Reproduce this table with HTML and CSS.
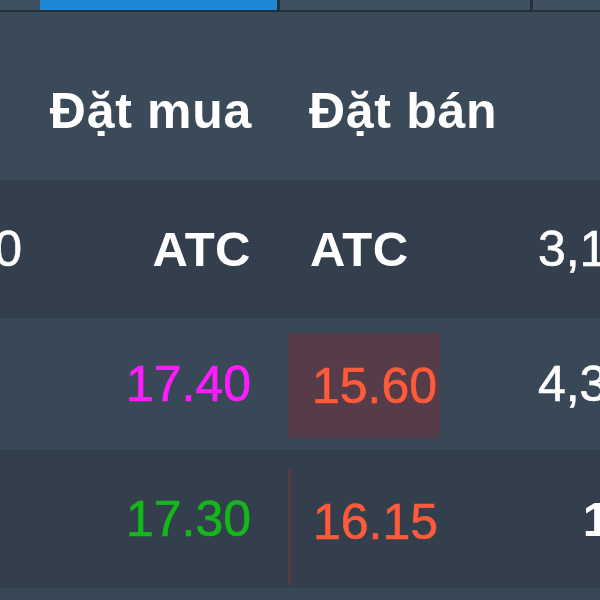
FILE: index.html
```html
<!DOCTYPE html>
<html lang="vi">
<head>
  <meta charset="UTF-8" />
  <title>Bảng giá</title>
  <link rel="stylesheet" href="styles.css">
</head>
<body>

  <div class="board">
    <div class="tabs">
      <div class="tab tab-first"></div>
      <div class="tab active"></div>
      <div class="tab"></div>
      <div class="tab"></div>
    </div>

    <div class="row head">
      <div class="cell c0"></div>
      <div class="cell c1">Đặt mua</div>
      <div class="cell c2">Đặt bán</div>
      <div class="cell c3"></div>
    </div>

    <div class="row dark">
      <div class="cell c0 num">2,500</div>
      <div class="cell c1 bold">ATC</div>
      <div class="cell c2 bold">ATC</div>
      <div class="cell c3 num">3,150</div>
    </div>

    <div class="row light">
      <div class="cell c0"></div>
      <div class="cell c1 num ceil">17.40</div>
      <div class="cell c2 num down"><span class="flash">15.60</span></div>
      <div class="cell c3 num">4,320</div>
    </div>

    <div class="row dark">
      <div class="cell c0"></div>
      <div class="cell c1 num up">17.30</div>
      <div class="cell c2 num down"><span class="flash-edge">16.15</span></div>
      <div class="cell c3 bold short">100</div>
    </div>

    <div class="row light"></div>
  </div>

</body>
</html>
```

FILE: styles.css
```css
* { margin: 0; padding: 0; box-sizing: border-box; }

html, body {
  width: 600px; height: 600px;
  overflow: hidden;
  background: #394857;
  font-family: "Liberation Sans", Arial, sans-serif;
  color: #fff;
}

.board { width: 720px; }

/* thanh tab phia tren */
.tabs {
  display: flex; height: 12px;
  background: #3f5061;
  border-bottom: 2px solid #26303a;
}
.tab { flex-shrink: 0; width: 253px; border-right: 3px solid #26303a; }
.tab-first { width: 40px; border-right: 0; }
.tab.active { width: 240px; background: #1f88d6; }

.row {
  display: grid;
  grid-template-columns: 40px 248px 152px 280px;
  align-items: center;
}
.head { height: 168px; background: #3b4a59; padding-top: 30px; }
.dark { height: 138px; background: #333f4d; }
.light { height: 132px; background: #394857; }

.cell { height: 100%; display: flex; align-items: center; white-space: nowrap; }
.c0 { justify-content: flex-end; padding-right: 18px; }
.c1 { justify-content: flex-end; padding-right: 37px; }
.c2 { justify-content: flex-start; }
.c3 { justify-content: flex-end; padding-right: 57px; }

.head .cell { font-size: 50px; font-weight: bold; letter-spacing: 0.7px; }
.head .c1 { padding-right: 36px; }
.head .c2 { padding-left: 21px; }

.num { font-size: 50px; -webkit-text-stroke: 0.6px currentColor; }
.bold { font-size: 49px; font-weight: bold; letter-spacing: 0.5px; }
.dark .c2.bold { padding-left: 22px; }

.ceil { color: #ff1cff; }
.up { color: #14b81a; }
.down { color: #ff5a3a; }

.flash {
  display: flex; align-items: center;
  height: 105px; width: 100%;
  margin-top: 3px;
  padding-left: 24px;
  background: #553c48;
}
.flash-edge {
  display: flex; align-items: center;
  height: 115px; width: 100%;
  margin-top: 17px;
  padding: 0 0 11px 22px;
  border-left: 3px solid #5a3a45;
}
.short { padding-right: 54px; }
```
